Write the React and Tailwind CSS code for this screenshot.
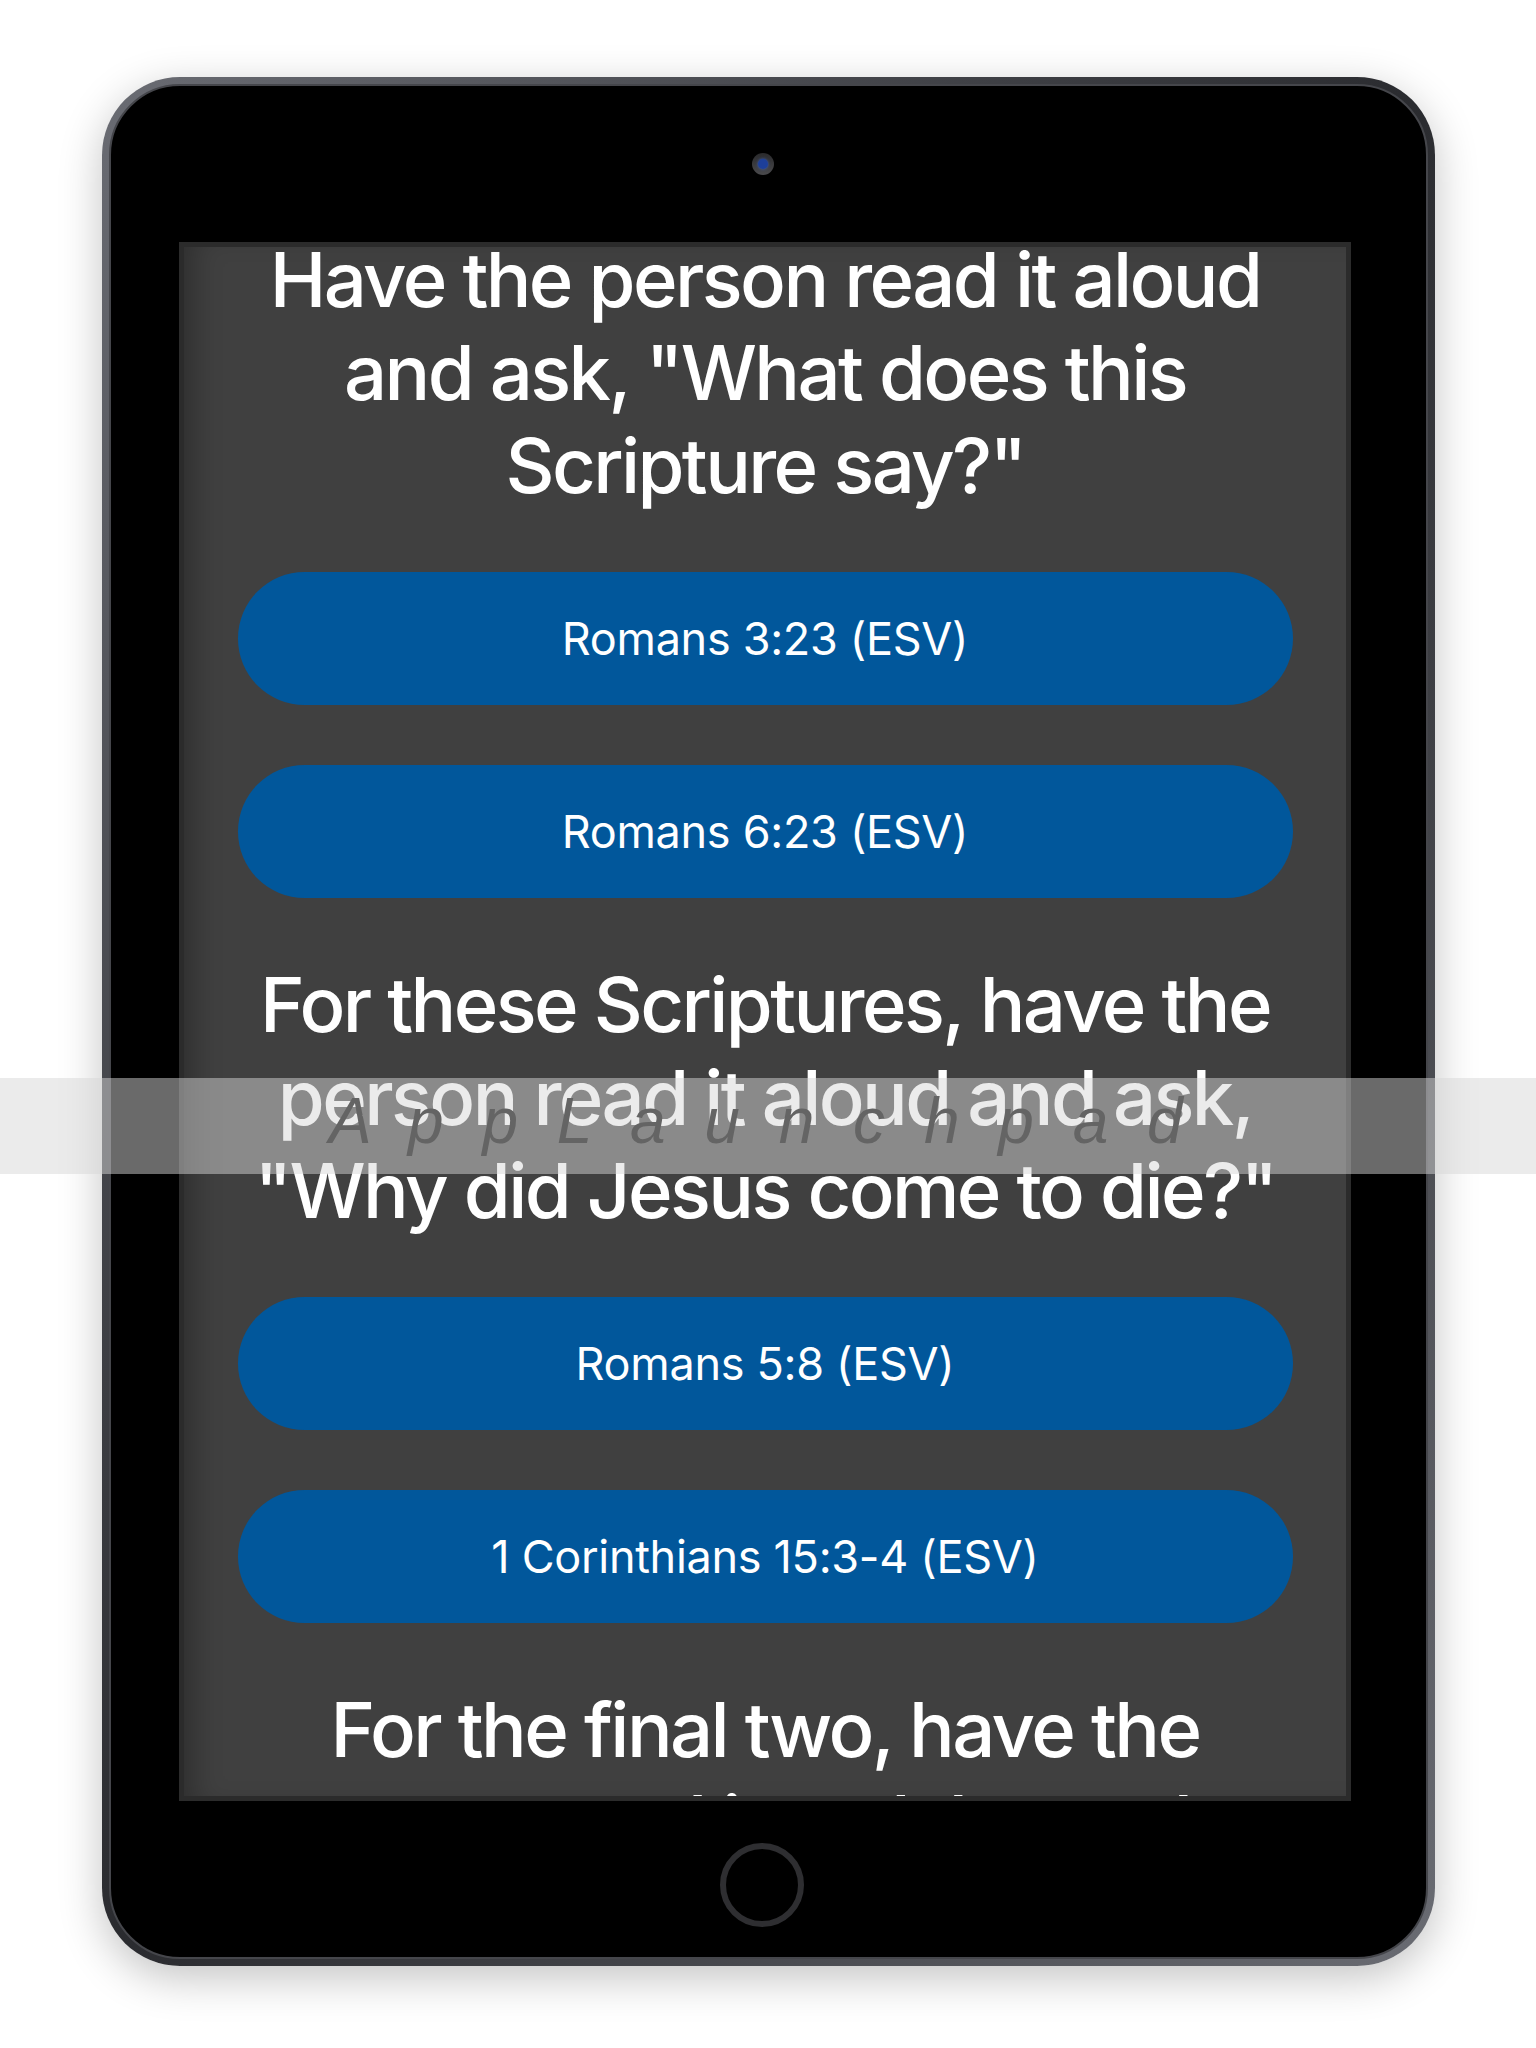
import React from "react";

const font = { fontFamily: "Inter, 'Noto Sans', sans-serif" };

const sections = [
  {
    lines: ["Have the person read it aloud", 'and ask, "What does this', 'Scripture say?"'],
    verses: ["Romans 3:23 (ESV)", "Romans 6:23 (ESV)"],
  },
  {
    lines: ["For these Scriptures, have the", "person read it aloud and ask,", '"Why did Jesus come to die?"'],
    verses: ["Romans 5:8 (ESV)", "1 Corinthians 15:3-4 (ESV)"],
  },
  {
    lines: ["For the final two, have the", "person read it and then ask,", '"How do I receive this gift?"'],
    verses: [],
  },
];

function Heading({ lines }) {
  return (
    <h2 className="text-center text-[76px] font-medium leading-[93px] tracking-[-2.6px] text-white">
      {lines.map((l, i) => (
        <React.Fragment key={i}>
          {l}
          {i < lines.length - 1 && <br />}
        </React.Fragment>
      ))}
    </h2>
  );
}

function VerseButton({ label }) {
  return (
    <button
      type="button"
      className="flex h-[133px] w-[1055px] shrink-0 items-center justify-center rounded-full bg-[#01579b] text-[45px] tracking-[-0.3px] text-white"
    >
      {label}
    </button>
  );
}

export default function App() {
  return (
    <div className="relative min-h-[2048px] overflow-hidden bg-white pt-[77px]" style={font}>
      {/* tablet body */}
      <div className="mx-auto h-[1889px] w-[1333px] rounded-[78px] bg-gradient-to-br from-[#6a6c73] via-[#2a2b2f] to-[#6a6c73] p-[7px] shadow-[0_12px_44px_rgba(0,0,0,0.24)]">
        <div className="flex h-full flex-col items-center rounded-[71px] border-2 border-[#45464b] bg-black">
          {/* camera */}
          <div className="flex h-[156px] w-full items-center justify-center pr-[10px]">
            <div className="flex h-[22px] w-[22px] items-center justify-center rounded-full bg-gradient-to-b from-[#2a2a2c] to-[#4a4a4d]">
              <div className="h-[10px] w-[10px] rounded-full bg-[#1d3f9a] shadow-[0_0_3px_rgba(60,110,230,0.8)]" />
            </div>
          </div>

          {/* screen */}
          <div className="mr-[6px] h-[1559px] w-[1172px] overflow-hidden border-[5px] border-[#2b2b2b] bg-[#404040] shadow-[inset_24px_0_30px_-16px_rgba(0,0,0,0.3)]">
            <div className="-mt-[14px] flex flex-col items-center gap-[60px]">
              {sections.map((s, i) => (
                <React.Fragment key={i}>
                  <Heading lines={s.lines} />
                  {s.verses.map((v) => (
                    <VerseButton key={v} label={v} />
                  ))}
                </React.Fragment>
              ))}
            </div>
          </div>

          {/* home button */}
          <div className="flex w-full flex-1 items-center justify-center pr-[12px] pt-[12px]">
            <div className="h-[84px] w-[84px] rounded-full border-[6px] border-[#2e2e31]" />
          </div>
        </div>
      </div>

      {/* watermark band */}
      <div className="absolute left-0 right-0 top-[1078px] z-10 h-[96px] bg-[#d6d6d67e]">
        <p
          className="pr-[14px] text-center text-[64px] italic leading-[86px] tracking-[10.5px] text-[#646464]"
          style={{ fontFamily: "'Liberation Sans', Arial, sans-serif" }}
        >
          A p p L a u n c h p a d
        </p>
      </div>
    </div>
  );
}
